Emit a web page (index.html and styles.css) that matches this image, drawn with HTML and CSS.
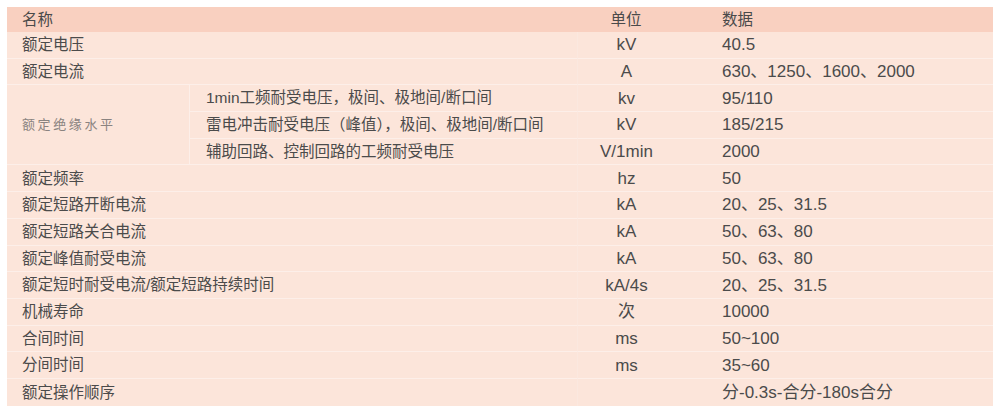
FILE: index.html
```html
<!DOCTYPE html>
<html lang="zh-CN">
<head>
<meta charset="utf-8">
<title>参数表</title>
<link rel="stylesheet" href="styles.css">
</head>
<body>
<div class="table">
  <div class="cell head name">名称</div>
  <div class="cell head unit">单位</div>
  <div class="cell head data">数据</div>

  <div class="cell name">额定电压</div>
  <div class="cell unit">kV</div>
  <div class="cell data">40.5</div>

  <div class="cell name">额定电流</div>
  <div class="cell unit">A</div>
  <div class="cell data">630、1250、1600、2000</div>

  <div class="cell group">额定绝缘水平</div>
  <div class="cell sub">1min工频耐受电压，极间、极地间/断口间</div>
  <div class="cell unit">kv</div>
  <div class="cell data">95/110</div>
  <div class="cell sub">雷电冲击耐受电压（峰值），极间、极地间/断口间</div>
  <div class="cell unit">kV</div>
  <div class="cell data">185/215</div>
  <div class="cell sub">辅助回路、控制回路的工频耐受电压</div>
  <div class="cell unit">V/1min</div>
  <div class="cell data">2000</div>

  <div class="cell name">额定频率</div>
  <div class="cell unit">hz</div>
  <div class="cell data">50</div>

  <div class="cell name">额定短路开断电流</div>
  <div class="cell unit">kA</div>
  <div class="cell data">20、25、31.5</div>

  <div class="cell name">额定短路关合电流</div>
  <div class="cell unit">kA</div>
  <div class="cell data">50、63、80</div>

  <div class="cell name">额定峰值耐受电流</div>
  <div class="cell unit">kA</div>
  <div class="cell data">50、63、80</div>

  <div class="cell name">额定短时耐受电流/额定短路持续时间</div>
  <div class="cell unit">kA/4s</div>
  <div class="cell data">20、25、31.5</div>

  <div class="cell name">机械寿命</div>
  <div class="cell unit">次</div>
  <div class="cell data">10000</div>

  <div class="cell name">合间时间</div>
  <div class="cell unit">ms</div>
  <div class="cell data">50~100</div>

  <div class="cell name">分间时间</div>
  <div class="cell unit">ms</div>
  <div class="cell data">35~60</div>

  <div class="cell name last">额定操作顺序</div>
  <div class="cell unit last"></div>
  <div class="cell data last">分-0.3s-合分-180s合分</div>
</div>
</body>
</html>
```

FILE: styles.css
```css
html, body {
  margin: 0;
  padding: 0;
  background: #ffffff;
}

body {
  font-family: "Liberation Sans", "Noto Sans CJK SC", sans-serif;
  color: #4b4b4b;
}

.table {
  display: grid;
  grid-template-columns: 183px 387px 98px 1fr;
  grid-template-rows: 25px repeat(14, 26.7px);
  width: 986px;
  margin: 7px 7px 0 7px;
  background: #fce5da;
}

.cell {
  display: flex;
  align-items: center;
  box-sizing: border-box;
  border-bottom: 1px solid #fdefe9;
  white-space: nowrap;
  line-height: 1;
}

.cell.last {
  border-bottom: none;
}

.head {
  background: #f9d0c0;
  border-bottom: none;
  color: #4a4a4a;
}

.name {
  grid-column: span 2;
  padding-left: 15px;
  font-size: 15.5px;
}

.group {
  grid-row: span 3;
  padding-left: 15px;
  font-size: 13px;
  letter-spacing: 2.6px;
  color: #8a8380;
  border-right: 1px solid #fdefe9;
}

.sub {
  padding-left: 16px;
  font-size: 15.5px;
}

.unit {
  justify-content: center;
  font-size: 17px;
  border-left: 1px solid #fbe8df;
}

.head.unit,
.head.name,
.head.data {
  font-size: 15.5px;
  border-left: none;
}

.data {
  padding-left: 47px;
  font-size: 17px;
}
```
